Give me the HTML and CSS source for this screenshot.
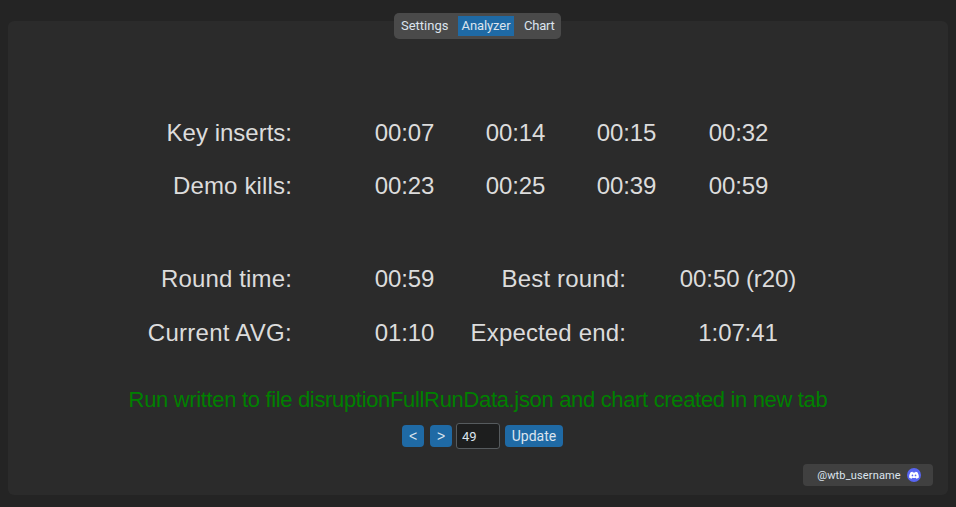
FILE: index.html
```html
<!DOCTYPE html>
<html lang="en">
<head>
<meta charset="utf-8">
<title>Analyzer</title>
<link rel="stylesheet" href="styles.css">
</head>
<body>
<nav class="tabs">
  <button class="tab">Settings</button>
  <button class="tab active">Analyzer</button>
  <button class="tab">Chart</button>
</nav>
<main class="panel">
  <section class="stats">
    <div class="row row-events"><span class="label">Key inserts:</span><span>00:07</span><span>00:14</span><span>00:15</span><span>00:32</span></div>
    <div class="row row-events"><span class="label wide">Demo kills:</span><span>00:23</span><span>00:25</span><span>00:39</span><span>00:59</span></div>
    <div class="row row-summary first"><span class="label wide">Round time:</span><span>00:59</span><span class="label wide">Best round:</span><span>00:50 (r20)</span></div>
    <div class="row row-summary"><span class="label wider">Current AVG:</span><span>01:10</span><span class="label wide">Expected end:</span><span>1:07:41</span></div>
  </section>
  <p class="message">Run written to file disruptionFullRunData.json and chart created in new tab</p>
  <div class="controls">
    <button class="btn step">&lt;</button>
    <button class="btn step">&gt;</button>
    <input class="round" type="text" value="49" aria-label="Round">
    <button class="btn update">Update</button>
  </div>
  <footer class="contact">
    <span>@wtb_username</span>
    <svg width="14" height="14" viewBox="0 0 28 28" aria-hidden="true">
      <circle cx="14" cy="14" r="14" fill="#5865f2"/>
      <path fill="#fff" d="M11 7.500Q8.300 8 6.800 9Q4 14 4.200 18.800Q6.500 20.800 9.200 21.300L10.500 19.300Q14 20.300 17.500 19.300L18.800 21.300Q21.500 20.800 23.800 18.800Q24 14 21.200 9Q19.700 8 17 7.500L16.200 9Q14 8.700 11.800 9Z"/>
      <ellipse cx="10.900" cy="14.800" rx="1.700" ry="1.900" fill="#5865f2"/>
      <ellipse cx="17.100" cy="14.800" rx="1.700" ry="1.900" fill="#5865f2"/>
    </svg>
  </footer>
</main>
</body>
</html>
```
FILE: styles.css
```css
* { box-sizing: border-box; }
body {
  margin: 0;
  height: 507px;
  padding: 21px 8px 12px;
  overflow: hidden;
  background: #242424;
  color: #dce4ee;
  font-family: Roboto, sans-serif;
}
button, input { font: inherit; color: inherit; border: 0; margin: 0; }
.tabs {
  position: absolute;
  top: 13px;
  left: 394px;
  display: grid;
  grid-template-columns: 55px 56px 32px;
  column-gap: 6px;
  width: 167px;
  height: 26px;
  padding: 3px;
  border-radius: 5px;
  background: #4a4a4a;
  font-size: 13px;
}
.tab { padding: 0 4px; height: 20px; line-height: 20px; background: transparent; white-space: nowrap; }
.tab.active { background: #1f6aa5; padding: 0; letter-spacing: -0.1px; }
.tab:last-child { padding: 0; margin-left: 4px; letter-spacing: -0.2px; }
.panel {
  display: flex;
  flex-direction: column;
  height: 474px;
  border-radius: 6px;
  background: #2b2b2b;
}
.stats {
  padding-top: 85px;
  color: #dcdcdc;
  font-family: "Liberation Sans", sans-serif;
  font-size: 24px;
}
.row { display: grid; height: 53px; line-height: 53px; text-align: center; white-space: nowrap; }
.row-events { grid-template-columns: 284px 168px 111px 111px 113px; }
.row-summary { grid-template-columns: 284px 168px 166px 224px; height: 54px; line-height: 54px; }
.row span:nth-child(2) { padding-left: 57px; }
.row span:not(.label) { letter-spacing: -0.1px; }
.row .label { text-align: right; }
.wide { letter-spacing: 0.15px; }
.wider { letter-spacing: 0.27px; }
.first { margin-top: 40px; }
.message {
  margin: 26px 0 0;
  height: 28px;
  color: #008000;
  font: 22px/28px "Liberation Sans", sans-serif;
  letter-spacing: -0.335px;
  text-align: center;
}
.controls { display: flex; align-items: center; height: 26px; margin: 9px 0 0 394px; font-size: 14px; }
.btn { height: 22px; padding: 0; border-radius: 4px; background: #1f6aa5; }
.step { width: 22px; margin-right: 6px; font-family: "Liberation Sans", sans-serif; }
.step + .round { margin-left: -2px; }
.round { width: 44px; height: 26px; padding: 0 5px; border: 1px solid #565b5e; border-radius: 3px; background: #1d1e1e; font-size: 13px; }
.update { width: 58px; margin-left: 5px; }
.contact {
  display: flex;
  align-items: center;
  justify-content: center;
  gap: 6px;
  align-self: flex-end;
  width: 130px;
  height: 22px;
  margin: 15px 15px 0 0;
  padding-left: 2px;
  border-radius: 4px;
  background: #404040;
  font-size: 11px;
  letter-spacing: 0.15px;
}
```
